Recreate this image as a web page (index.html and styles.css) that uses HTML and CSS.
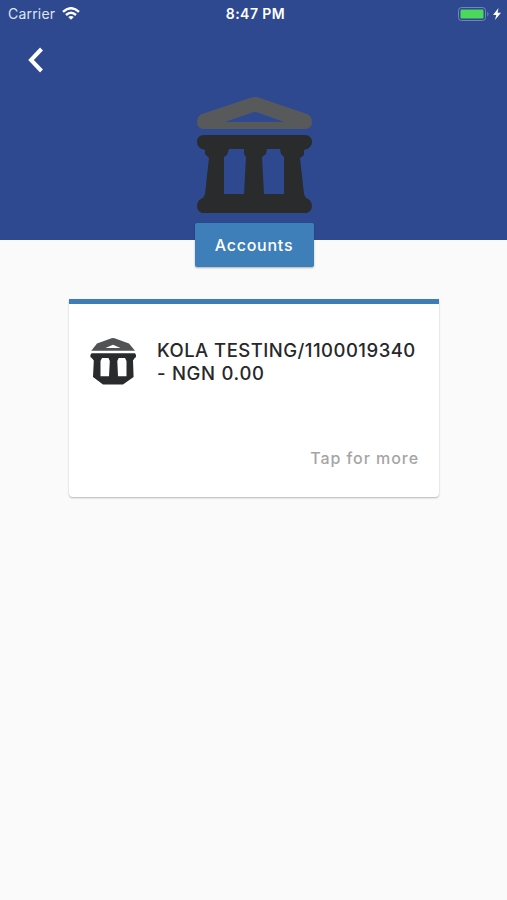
FILE: index.html
```html
<!DOCTYPE html>
<html lang="en">
<head>
<meta charset="utf-8">
<meta name="viewport" content="width=device-width">
<title>Accounts</title>
<link rel="stylesheet" href="styles.css">
</head>
<body>
<header class="hero">
  <div class="status">
    <div class="carrier"><span class="carrier-name">Carrier</span>
      <svg class="wifi" viewBox="0 0 18 13"><g fill="none" stroke="#fff" stroke-width="2.4"><path d="M1 4.8Q9-2.4 17 4.8"/><path d="M4 8Q9 3.5 14 8"/></g><path fill="#fff" d="M6.2 10Q9 7.8 11.8 10L9 12.8Z"/></svg>
    </div>
    <time class="clock">8:47 PM</time>
    <div class="power">
      <svg class="battery" viewBox="0 0 32 14"><rect x=".5" y=".5" width="27" height="13" rx="3" fill="none" stroke="#7186b8"/><rect x="2.5" y="2.5" width="23" height="9" rx="1.2" fill="#4cd95b"/><path d="M29.3 4.5Q31.8 7 29.3 9.5Z" fill="#7186b8"/></svg>
      <svg class="bolt" viewBox="0 0 8 12"><path fill="#fff" d="M5.5 0L0 7H3.3L2 12L8 4.8H4.6Z"/></svg>
    </div>
  </div>
  <nav class="nav"><svg class="back" viewBox="0 0 16 26"><path d="M13.5 2L3 13L13.5 24" fill="none" stroke="#fff" stroke-width="4"/></svg></nav>
  <svg class="bank-large" viewBox="0 0 116 116">
    <path fill="#58595b" fill-rule="evenodd" d="M53 1Q58-1 63 1L110 17Q115 19 115 25Q115 32 108 32H7Q0 32 0 25Q0 19 5 17ZM28 25H87L62 16Q58 14 54 16Z"/>
    <path fill="#292b2d" fill-rule="evenodd" d="M7 38H108C117 38 117 50 110 52L107 53V58L103 61L107 97L109 101C117 103 117 116 108 116H7C-2 116-2 103 6 101L8 97L12 61L8 57V53L5 52C-2 50-2 38 7 38ZM32 52L30 58L27 60V97H47L49 60L47 57V52ZM70 52L69 57L65 60L67 97H87V60L84 57L83 52Z"/>
  </svg>
  <button class="tab"><span>Accounts</span></button>
</header>
<main>
  <article class="card">
    <div class="account">
      <svg class="bank-small" viewBox="0 0 47 47">
        <path fill="#505254" fill-rule="evenodd" d="M21.5 .3Q23 -.3 24.5 .3L39 5.6L45 12.7H1.3L7 5.6ZM15.5 10H30.5L23 6.7Z"/>
        <path fill="#292b2d" fill-rule="evenodd" d="M1.5 15.3H45Q47.5 18.5 44.5 20.3L43 22.5L43.6 39L33 46.5H13L3 39L3.8 22.5L2 20.3Q-1.2 18.5 1.5 15.3ZM12 20L10.5 23V38.3H19L19.8 23L18.5 20ZM28.7 20L27.3 23L28 38.3H36.5V23L35 20Z"/>
      </svg>
      <h1 class="name"><span class="line number">KOLA TESTING/1100019340</span><span class="line balance">- NGN 0.00</span></h1>
    </div>
    <p class="more">Tap for more</p>
  </article>
</main>
</body>
</html>
```

FILE: styles.css
```css
* { box-sizing: border-box; }
body { margin: 0; min-height: 900px; background: #fafafa; font-family: Inter, "Liberation Sans", sans-serif; color: #27282a; }
.hero { height: 240px; background: #2e4990; display: flex; flex-direction: column; align-items: center; }
.status { width: 100%; height: 27px; flex: none; display: grid; grid-template-columns: 1fr auto 1fr; align-items: center; padding: 0 6px 0 8px; color: #fff; }
.carrier { display: flex; align-items: center; gap: 7px; font-size: 14px; color: #dfe5f3; }
.carrier-name { letter-spacing: .2px; }
.wifi { width: 18px; height: 13px; }
.clock { font-size: 14px; font-weight: 600; letter-spacing: .45px; margin-left: 2px; }
.power { display: flex; justify-content: flex-end; align-items: center; gap: 3px; }
.battery { width: 32px; height: 14px; }
.bolt { width: 8px; height: 12px; }
.nav { width: 100%; height: 70px; flex: none; padding: 20px 0 0 28px; }
.back { display: block; width: 16px; height: 26px; }
.bank-large { width: 116px; height: 116px; flex: none; margin-left: 2px; }
.tab { width: 119px; height: 44px; flex: none; margin: 10px 0 0 1px; padding: 0; border: 0; border-radius: 2px; background: #3e7fba; color: #fff; font: 500 16px/45px Inter, sans-serif; letter-spacing: .75px; box-shadow: 0 1px 2px rgba(0,0,0,.3); }
.card { width: 370px; height: 198px; margin: 59px 0 0 69px; border-top: 5px solid #3e7cb6; border-radius: 0 0 4px 4px; background: #fff; box-shadow: 0 1px 2px rgba(0,0,0,.28); padding: 34px 20px 0 21px; display: flex; flex-direction: column; }
.account { display: flex; gap: 20px; height: 47px; }
.bank-small { width: 47px; height: 47px; flex: none; }
.name { margin: 1px 0 0; font-size: 18.5px; line-height: 23px; font-weight: 500; white-space: nowrap; letter-spacing: .47px; }
.line { display: block; }
.balance { letter-spacing: .7px; }
.more { margin: 61px 0 0; text-align: right; font-size: 16px; line-height: 24px; font-weight: 500; letter-spacing: .95px; color: #a5a5a5; }
```
